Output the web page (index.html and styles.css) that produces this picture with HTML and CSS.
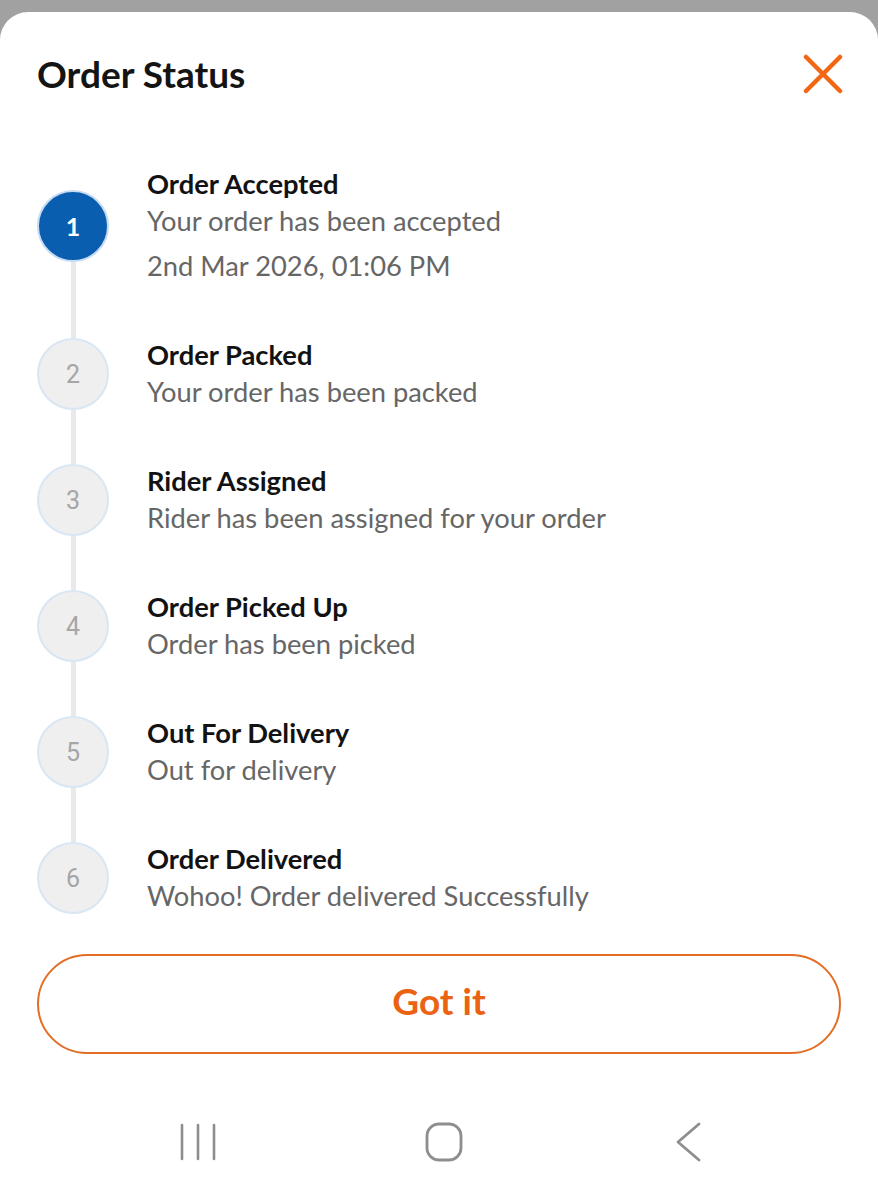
FILE: index.html
```
<!DOCTYPE html>
<html lang="en">
<head>
    <meta charset="UTF-8">
    <meta name="viewport" content="width=device-width, initial-scale=1.0">
    <title>Order Status</title>
    <link rel="stylesheet" href="styles.css">
</head>
<body>
    <div class="sheet">
        <div class="header">
            <h1 class="title">Order Status</h1>
            <button class="closeButton" aria-label="Close">
                <svg width="40" height="40" viewBox="0 0 40 40">
                    <path d="M3 3 L37 37 M37 3 L3 37" stroke="#f26614" stroke-width="4.5" stroke-linecap="round" fill="none"/>
                </svg>
            </button>
        </div>

        <div class="steps">
            <div class="step first done">
                <div class="rail">
                    <div class="seg"></div>
                    <div class="dot">1</div>
                    <div class="seg"></div>
                </div>
                <div class="info">
                    <div class="stepTitle">Order Accepted</div>
                    <div class="stepText">Your order has been accepted</div>
                    <div class="stepDate">2nd Mar 2026, 01:06 PM</div>
                </div>
            </div>
            <div class="step">
                <div class="rail">
                    <div class="seg"></div>
                    <div class="dot">2</div>
                    <div class="seg"></div>
                </div>
                <div class="info">
                    <div class="stepTitle">Order Packed</div>
                    <div class="stepText">Your order has been packed</div>
                </div>
            </div>
            <div class="step">
                <div class="rail">
                    <div class="seg"></div>
                    <div class="dot">3</div>
                    <div class="seg"></div>
                </div>
                <div class="info">
                    <div class="stepTitle">Rider Assigned</div>
                    <div class="stepText">Rider has been assigned for your order</div>
                </div>
            </div>
            <div class="step">
                <div class="rail">
                    <div class="seg"></div>
                    <div class="dot">4</div>
                    <div class="seg"></div>
                </div>
                <div class="info">
                    <div class="stepTitle">Order Picked Up</div>
                    <div class="stepText">Order has been picked</div>
                </div>
            </div>
            <div class="step">
                <div class="rail">
                    <div class="seg"></div>
                    <div class="dot">5</div>
                    <div class="seg"></div>
                </div>
                <div class="info">
                    <div class="stepTitle">Out For Delivery</div>
                    <div class="stepText">Out for delivery</div>
                </div>
            </div>
            <div class="step last">
                <div class="rail">
                    <div class="seg"></div>
                    <div class="dot">6</div>
                    <div class="seg"></div>
                </div>
                <div class="info">
                    <div class="stepTitle">Order Delivered</div>
                    <div class="stepText">Wohoo! Order delivered Successfully</div>
                </div>
            </div>
        </div>

        <button class="gotButton">Got it</button>

        <div class="navBar">
            <svg class="navIcon" width="40" height="40" viewBox="0 0 40 40">
                <path d="M4 3 V37 M20 3 V37 M36 3 V37" stroke="#8e8e8e" stroke-width="2.6" stroke-linecap="round" fill="none"/>
            </svg>
            <svg class="navIcon home" width="40" height="40" viewBox="0 0 40 40">
                <rect x="3" y="2" width="34" height="36" rx="12" stroke="#8e8e8e" stroke-width="2.8" fill="none"/>
            </svg>
            <svg class="navIcon" width="40" height="40" viewBox="0 0 40 40">
                <path d="M38 2 L17 20 L38 38" stroke="#8e8e8e" stroke-width="2.8" stroke-linecap="round" stroke-linejoin="round" fill="none"/>
            </svg>
        </div>
    </div>
</body>
</html>
```

FILE: styles.css
```
body {
    margin: 0;
    background: #a1a1a1;
    font-family: Lato, "Open Sans", sans-serif;
    height: 1200px;
    overflow: hidden;
}

.sheet {
    margin-top: 12px;
    height: 1188px;
    background: #ffffff;
    border-radius: 28px 28px 0 0;
    padding: 0 37px;
    box-sizing: border-box;
}

.header {
    display: flex;
    justify-content: space-between;
    align-items: center;
    padding-top: 40px;
    height: 44px;
    margin-bottom: 45px;
}

.title {
    margin: 0;
    font-size: 37px;
    font-weight: 700;
    color: #141414;
    line-height: 44px;
}

.closeButton {
    border: none;
    background: none;
    padding: 0;
    margin-right: -2px;
    width: 40px;
    height: 40px;
}

.step {
    display: flex;
    height: 126px;
}

.step.first {
    height: 170px;
}

.rail {
    width: 72px;
    display: flex;
    flex-direction: column;
    align-items: center;
    flex-shrink: 0;
}

.seg {
    flex: 1;
    width: 5px;
    background: #e9e9e9;
}

.step.first .seg:first-child,
.step.last .seg:last-child {
    background: transparent;
}

.dot {
    width: 68px;
    height: 68px;
    border-radius: 50%;
    background: #efeff0;
    border: 2px solid #d9e6f4;
    color: #a6a6a6;
    font-family: Roboto, Lato, sans-serif;
    font-size: 25px;
    display: flex;
    justify-content: center;
    align-items: center;
    flex-shrink: 0;
}

.step.done .dot {
    background: #0a5eb0;
    border-color: #c5dcf2;
    color: #ffffff;
    font-family: Lato, sans-serif;
    font-weight: 700;
}

.info {
    margin-left: 38px;
    display: flex;
    flex-direction: column;
    justify-content: center;
}

.stepTitle {
    font-size: 27.3px;
    font-weight: 700;
    color: #121212;
    line-height: 37px;
    margin-top: -3px;
}

.stepText {
    font-size: 27.3px;
    color: #666666;
    line-height: 37px;
}

.stepDate {
    font-size: 27.3px;
    color: #666666;
    line-height: 37px;
    margin-top: 8px;
}

.gotButton {
    display: block;
    width: 100%;
    height: 100px;
    margin-top: 13px;
    padding-bottom: 9px;
    border: 2px solid #e46d26;
    border-radius: 50px;
    background: #ffffff;
    color: #ec6213;
    font-family: Lato, "Open Sans", sans-serif;
    font-size: 37px;
    font-weight: 700;
}

.navBar {
    display: flex;
    justify-content: space-between;
    align-items: center;
    margin-top: 68px;
    padding: 0 140px 0 141px;
}

.navIcon.home {
    margin-left: 8px;
}
```
